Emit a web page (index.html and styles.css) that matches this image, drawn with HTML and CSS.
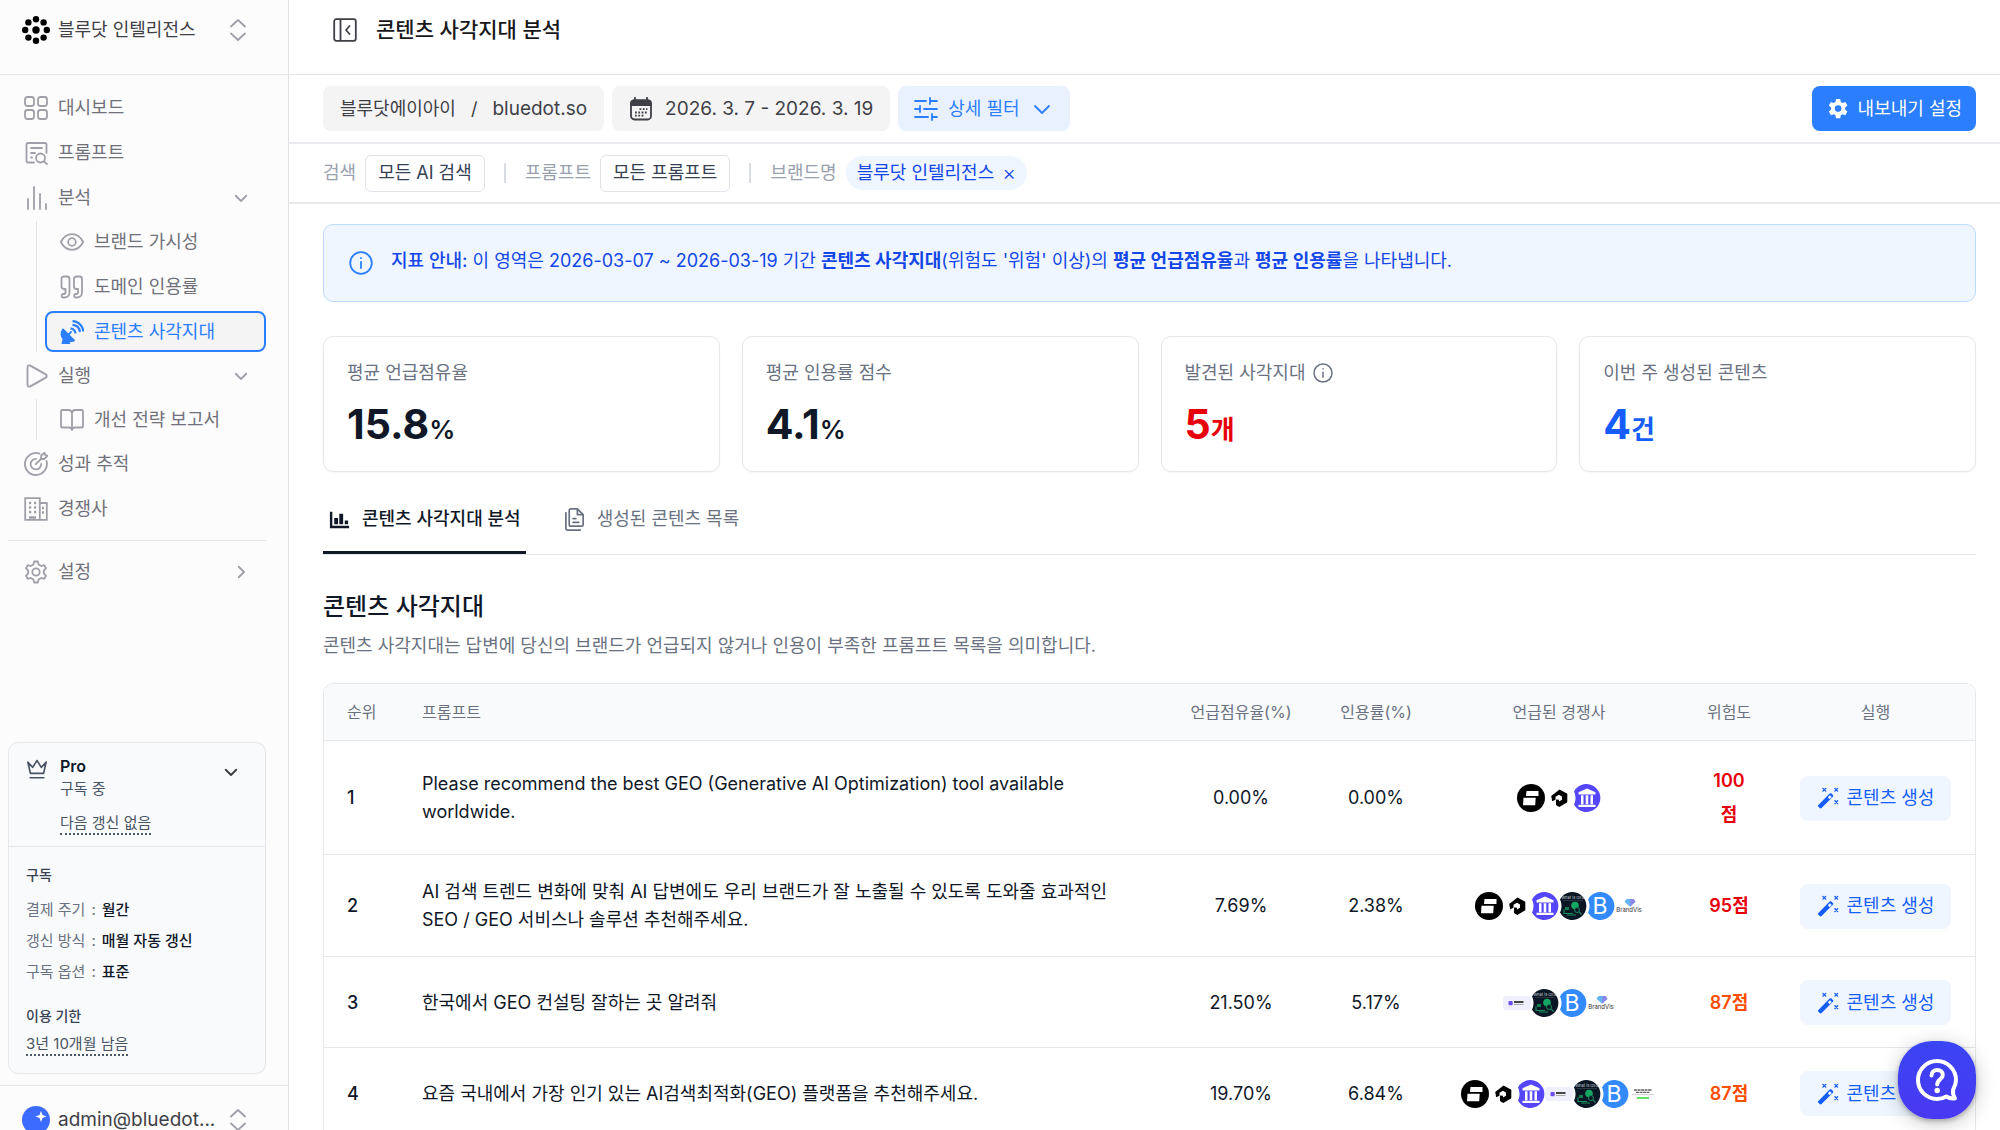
FILE: index.html
```html
<!DOCTYPE html>
<html lang="ko">
<head>
    <meta charset="UTF-8">
    <meta name="viewport" content="width=device-width, initial-scale=1">
    <title>콘텐츠 사각지대 분석</title>
    <link rel="stylesheet" href="styles.css">
</head>
<body>
<!-- icons -->
<svg class="sprite" aria-hidden="true">
    <symbol id="i-updown" viewBox="0 0 24 24"><path d="M5 8.5 12 2l7 6.5M5 15.5 12 22l7-6.5"/></symbol>
    <symbol id="i-down" viewBox="0 0 24 24"><path d="m5 9 7 7 7-7"/></symbol>
    <symbol id="i-right" viewBox="0 0 24 24"><path d="m9 5 7 7-7 7"/></symbol>
    <symbol id="i-grid" viewBox="0 0 24 24"><rect x="1" y="1" width="9" height="9" rx="2.5"/><rect x="14" y="1" width="9" height="9" rx="2.5"/><rect x="1" y="14" width="9" height="9" rx="2.5"/><rect x="14" y="14" width="9" height="9" rx="2.5"/></symbol>
    <symbol id="i-prompt" viewBox="0 0 24 24"><path d="M10 21.500H4a1.500 1.500 0 0 1-1.500-1.500V3.500A1.500 1.500 0 0 1 4 2h17a1.500 1.500 0 0 1 1.500 1.500V12M7 7h11M7 12h4M7 16.500h1"/><circle cx="16.500" cy="17" r="4.500"/><path d="m20 20.500 3 2.500"/></symbol>
    <symbol id="i-bars" viewBox="0 0 24 24"><path d="M4 13v10M10 1v22M16 8v15M22 18v5"/></symbol>
    <symbol id="i-eye" viewBox="0 0 24 24"><path d="M.8 12C3.500 7 7.500 4.200 12 4.200S20.500 7 23.200 12C20.500 17 16.500 19.800 12 19.800S3.500 17 .8 12z"/><circle cx="12" cy="12" r="3.800"/></symbol>
    <symbol id="i-quote" viewBox="0 0 24 24"><path d="M1.500 4A2.500 2.500 0 0 1 4 1.500h3A2.500 2.500 0 0 1 9.500 4v13.500A5 5 0 0 1 4.500 22.500H3a1.300 1.300 0 0 1-1.300-1.300v-.9A1.300 1.300 0 0 1 3 19h.8A1.700 1.700 0 0 0 5.500 17.300V14H4a2.500 2.500 0 0 1-2.500-2.500z"/><path d="M14 4a2.500 2.500 0 0 1 2.500-2.500h3A2.500 2.500 0 0 1 22 4v13.500a5 5 0 0 1-5 5h-1.500a1.300 1.300 0 0 1-1.300-1.300v-.9a1.300 1.300 0 0 1 1.300-1.300h.8a1.700 1.700 0 0 0 1.700-1.700V14h-1.500a2.500 2.500 0 0 1-2.500-2.500z"/></symbol>
    <symbol id="i-dish" viewBox="0 0 24 24"><path d="M3 9.500 14 20.500l-5.500 1 .7 2H2.500L3.500 19C1.200 16.500 1 13 3 9.500z" fill="currentColor"/><path d="m8 15 3-3"/><path d="M10.500 8.500c2.800.3 4.700 2.200 5 5M12.500 4.800c4 .3 7 3 7.500 7.200M12.500 1.200c6 .2 10.300 4.300 10.800 10.300" stroke-linecap="butt" stroke-width="2.200"/></symbol>
    <symbol id="i-play" viewBox="0 0 24 24"><path d="M3.500 3.200v17.600c0 1.500 1.500 2.300 2.800 1.600l15.500-8.800c1.300-.7 1.300-2.500 0-3.200L6.300 1.600C5 .9 3.500 1.700 3.500 3.200z"/></symbol>
    <symbol id="i-book" viewBox="0 0 24 24"><path d="M12 5.500C12 3.500 10.500 2 8.500 2H2.300C1.500 2 1 2.500 1 3.300v14.900c0 .8.500 1.300 1.300 1.300H9c1.700 0 3 1 3 2.500 0-1.500 1.300-2.500 3-2.500h6.700c.8 0 1.300-.5 1.300-1.300V3.300C23 2.500 22.500 2 21.700 2h-6.200c-2 0-3.500 1.500-3.500 3.500zM12 5.500V22"/></symbol>
    <symbol id="i-target" viewBox="0 0 24 24"><path d="M15.500 1.600A11 11 0 1 0 22.500 9M12 6.800A5.300 5.300 0 1 0 17.200 12M11.800 12.200 17 7M17 7l.2-3.500L20.500.8l.7 2.200 2.200.7-2.900 3.300z"/></symbol>
    <symbol id="i-building" viewBox="0 0 24 24"><path d="M1.200 1.200h14.600v21.600H1.200zM15.800 6h7v16.800h-7" stroke-linejoin="miter"/><path d="M5 6h2.200M10 6h2.200M5 10.500h2.200M10 10.500h2.200M5 15h2.200M10 15h2.200M18 11h2M18 15.500h2M5 20.500h7" stroke-width="2.400" stroke-linecap="butt"/></symbol>
    <symbol id="i-gear" viewBox="0 0 24 24"><path d="M10.200 1.500h3.600l.8 3 2.600 1.500 3-.8 1.800 3.100-2.200 2.200v3l2.200 2.200-1.800 3.100-3-.8-2.600 1.500-.8 3h-3.600l-.8-3L6.800 18l-3 .8L2 15.700l2.200-2.200v-3L2 8.300l1.800-3.100 3 .8 2.600-1.500z"/><circle cx="12" cy="12" r="3.700"/></symbol>
    <symbol id="i-crown" viewBox="0 0 24 24"><path d="m2 4.500 2.800 12.200h14.400L22 4.500l-5.300 5.700L12 2.800l-4.700 7.400zM4.500 21.500h15"/></symbol>
    <symbol id="i-collapse" viewBox="0 0 24 24"><rect x="1.200" y="1.200" width="21.600" height="21.600" rx="2"/><path d="M7.500 1.500v21M16.500 8l-3.500 4 3.500 4"/></symbol>
    <symbol id="i-calendar" viewBox="0 0 24 24"><rect x="2" y="3.500" width="20" height="19" rx="3.500"/><path d="M2 8V6.500a3 3 0 0 1 3-3h14a3 3 0 0 1 3 3V8z" fill="currentColor"/><path d="M6 .8v3M18 .8v3"/><path d="M10.500 12.200h8M6 15.500h12.500M6 18.700h9" stroke-dasharray="1.800 1.500" stroke-linecap="butt"/></symbol>
    <symbol id="i-sliders" viewBox="0 0 24 24"><path d="M1 4h11M16 1v6M16 4h7M1 12h5M6 9v6M10 12h13M1 20h13M18 20h5M18 17v6"/></symbol>
    <symbol id="i-cog" viewBox="0 0 24 24"><path fill="currentColor" fill-rule="evenodd" stroke="none" d="M10 2h4.200l.6 3 1.600.9 2.900-1 2.100 3.700-2.300 2v2l2.300 2-2.100 3.700-2.900-1-1.600.9-.6 3H10l-.6-3-1.600-.9-2.900 1-2.100-3.700 2.300-2v-2l-2.300-2 2.100-3.700 2.900 1 1.600-.9zM12.100 8.300a3.300 3.300 0 1 0 0 6.600 3.300 3.300 0 0 0 0-6.600z"/></symbol>
    <symbol id="i-info" viewBox="0 0 24 24"><circle cx="12" cy="12" r="10.800"/><path d="M12 11v6M12 7v.2"/></symbol>
    <symbol id="i-chart" viewBox="0 0 24 24"><path fill="currentColor" stroke="none" d="M2 4h2.500v14.500H22V21H2zM6.500 10.500h4V17h-4zM11.800 6h4v11h-4zM17.500 13H21v4h-3.500z"/></symbol>
    <symbol id="i-docs" viewBox="0 0 24 24"><path d="M6.500 2.500A1.500 1.500 0 0 1 8 1h7l6 6v10.500a1.500 1.500 0 0 1-1.500 1.500H8a1.500 1.500 0 0 1-1.500-1.500zM15 1v6h6M10.500 11h3M10.500 15h6M3 5v16.500A1.500 1.500 0 0 0 4.500 23H18"/></symbol>
    <symbol id="i-wand" viewBox="0 0 24 24"><path fill="currentColor" stroke="none" fill-rule="evenodd" d="M1.500 19.500 13.800 7.200a1.500 1.500 0 0 1 2.100 0l1.400 1.400a1.500 1.500 0 0 1 0 2.100L5 23a1.500 1.500 0 0 1-2.100 0l-1.400-1.400a1.500 1.500 0 0 1 0-2.100zM11.800 11.300l2 2 2.300-2.300-2-2z"/><path d="m6.500 1.500 3 3m0-3-3 3M19.500 1.500l3 3m0-3-3 3M19.500 15l3 3m0-3-3 3" stroke-width="1.500"/></symbol>
    <!-- competitor logos -->
    <symbol id="c-block" viewBox="0 0 28 28"><circle cx="14" cy="14" r="14" fill="#000"/><path d="M9.500 7h12v5H9zM6.500 13.800h12.200l-.5 7.400H6z" fill="#fff"/></symbol>
    <symbol id="c-hex" viewBox="0 0 28 28"><path fill="#000" fill-rule="evenodd" d="m14.500 5.500 7.800 4.300v8.500l-8 4.700-3.300-2v-5.500l3 .3v1.700l3-1.800v-3.300l-3-1.700-3.500 2v3l-3.300 1.500-1-5.300z"/></symbol>
    <symbol id="c-bank" viewBox="0 0 28 28"><path d="M1 7.500a14 14 0 1 1 0 13c2-4 2-9 0-13z" fill="#5546fb"/><path fill="#fff" d="m14 4.500 8.500 3.700v2.300h-17V8.200zM8 11.300h2.500v9H8zM12.700 11.300h2.600v9h-2.600zM17.500 11.300H20v9h-2.500zM5.500 20.800h17V23h-17z"/></symbol>
    <symbol id="c-geo" viewBox="0 0 28 28"><path d="M1 7.500a14 14 0 1 1 0 13c2-4 2-9 0-13z" fill="#0b1624"/><text x="14" y="7" font-size="4" text-anchor="middle" fill="#ccd4d8">What is GEO</text><path d="M4 8.500h20" stroke="#38454f" stroke-width=".7"/><circle cx="16" cy="13.500" r="3.800" fill="#14a764"/><circle cx="18" cy="18" r="2.500" fill="#0b1624" stroke="#178b5c"/><path d="m20 20 2.500 2.500M5 17.500v4h9M8 23h9" stroke="#178b5c" stroke-width="1.200" fill="none"/><path d="M6 15h4v3H6z" fill="#0f7d4d"/></symbol>
    <symbol id="c-b" viewBox="0 0 28 28"><path d="M1 7.500a14 14 0 1 1 0 13c2-4 2-9 0-13z" fill="#338afc"/><text x="13" y="22" font-size="23" text-anchor="middle" fill="#fff">B</text></symbol>
    <symbol id="c-vis" viewBox="0 0 28 28"><path d="M11.500 7h7l2 2.800-5.500 5-5.500-5z" fill="#64b5f3"/><path d="M15.500 7h3l2 2.800-5.500 5z" fill="#8e86ee"/><text x="14" y="20" font-size="6" text-anchor="middle" fill="#333">BrandVis</text></symbol>
    <symbol id="c-card" viewBox="0 0 28 28"><rect y="7" width="28" height="14" rx="3" fill="#f0effd"/><rect x="5.500" y="12" width="4.200" height="4.200" rx="1" fill="#6d4df0"/><path d="M11 13h9.500" stroke="#333" stroke-width="1.800" stroke-linecap="butt"/><path d="M11 15.500h9.500" stroke="#999" stroke-width=".8"/></symbol>
    <symbol id="c-sheet" viewBox="0 0 28 28"><path d="M5 10h18M7 12.300h14" stroke="#666" stroke-width="1.300" stroke-dasharray="3 .5"/><path d="M3 14.700h22" stroke="#bbb" stroke-width=".8"/><path d="M8 18h12" stroke="#5be36a" stroke-width="2"/></symbol>
</svg>

<div class="app">
    <aside class="sidebar">
        <button type="button" class="workspace">
            <svg class="logo" viewBox="0 0 28 28">
                <circle cx="14" cy="14" r="3.700"/><circle cx="14" cy="3.200" r="3.200"/><circle cx="14" cy="24.800" r="3.200"/><circle cx="3.200" cy="14" r="3.200"/><circle cx="24.800" cy="14" r="3.200"/><circle cx="6.400" cy="6.400" r="3.200"/><circle cx="21.600" cy="6.400" r="3.200"/><circle cx="6.400" cy="21.600" r="3.200"/><circle cx="21.600" cy="21.600" r="3.200"/>
            </svg>
            <span class="name">블루닷 인텔리전스</span>
            <svg class="icon muted"><use href="#i-updown"/></svg>
        </button>

        <nav class="menu">
            <a href="#" class="item"><svg class="icon"><use href="#i-grid"/></svg><span>대시보드</span></a>
            <a href="#" class="item"><svg class="icon"><use href="#i-prompt"/></svg><span>프롬프트</span></a>
            <a href="#" class="item"><svg class="icon"><use href="#i-bars"/></svg><span>분석</span><svg class="icon arrow"><use href="#i-down"/></svg></a>
            <div class="submenu">
                <a href="#" class="item"><svg class="icon"><use href="#i-eye"/></svg><span>브랜드 가시성</span></a>
                <a href="#" class="item"><svg class="icon"><use href="#i-quote"/></svg><span>도메인 인용률</span></a>
                <a href="#" class="item active"><svg class="icon"><use href="#i-dish"/></svg><span>콘텐츠 사각지대</span></a>
            </div>
            <a href="#" class="item"><svg class="icon"><use href="#i-play"/></svg><span>실행</span><svg class="icon arrow"><use href="#i-down"/></svg></a>
            <div class="submenu">
                <a href="#" class="item"><svg class="icon"><use href="#i-book"/></svg><span>개선 전략 보고서</span></a>
            </div>
            <a href="#" class="item"><svg class="icon"><use href="#i-target"/></svg><span>성과 추적</span></a>
            <a href="#" class="item"><svg class="icon"><use href="#i-building"/></svg><span>경쟁사</span></a>
        </nav>
        <nav class="menu settings">
            <a href="#" class="item"><svg class="icon"><use href="#i-gear"/></svg><span>설정</span><svg class="icon arrow"><use href="#i-right"/></svg></a>
        </nav>

        <section class="plan">
            <div class="plan-head">
                <svg class="icon"><use href="#i-crown"/></svg>
                <div class="plan-name">
                    <strong>Pro</strong>
                    <span>구독 중</span>
                    <span class="dotted">다음 갱신 없음</span>
                </div>
                <svg class="icon arrow"><use href="#i-down"/></svg>
            </div>
            <div class="plan-body">
                <h3>구독</h3>
                <p><span>결제 주기</span><span>:</span><b>월간</b></p>
                <p><span>갱신 방식</span><span>:</span><b>매월 자동 갱신</b></p>
                <p><span>구독 옵션</span><span>:</span><b>표준</b></p>
                <h3 class="term">이용 기한</h3>
                <span class="dotted">3년 10개월 남음</span>
            </div>
        </section>

        <button type="button" class="account">
            <svg class="logo" viewBox="0 0 28 28"><circle cx="14" cy="14" r="14" fill="#3c6bff"/><path d="m19 5 1.500 4 4 1.500-4 1.500-1.500 4-1.500-4-4-1.500 4-1.500z" fill="#fff"/></svg>
            <span class="name">admin@bluedot...</span>
            <svg class="icon muted"><use href="#i-updown"/></svg>
        </button>
    </aside>

    <main class="main">
        <header class="topbar">
            <svg class="icon"><use href="#i-collapse"/></svg>
            <h1>콘텐츠 사각지대 분석</h1>
        </header>

        <div class="toolbar">
            <button type="button" class="chip"><span>블루닷에이아이</span><span class="slash">/</span><span class="latin">bluedot.so</span></button>
            <button type="button" class="chip"><svg class="icon"><use href="#i-calendar"/></svg><span class="latin">2026. 3. 7 - 2026. 3. 19</span></button>
            <button type="button" class="chip blue"><svg class="icon"><use href="#i-sliders"/></svg><span>상세 필터</span><svg class="icon"><use href="#i-down"/></svg></button>
            <button type="button" class="chip export"><svg class="icon"><use href="#i-cog"/></svg><span>내보내기 설정</span></button>
        </div>

        <div class="filters">
            <div class="filter"><span>검색</span><button type="button">모든 AI 검색</button></div>
            <div class="filter"><span>프롬프트</span><button type="button">모든 프롬프트</button></div>
            <div class="filter"><span>브랜드명</span><button type="button" class="pill">블루닷 인텔리전스<i>×</i></button></div>
        </div>

        <div class="content">
            <div class="notice">
                <svg class="icon"><use href="#i-info"/></svg>
                <p><b class="mid">지표 안내:</b> 이 영역은 2026-03-07 ~ 2026-03-19 기간 <b>콘텐츠 사각지대</b>(위험도 '위험' 이상)의 <b>평균 언급점유율</b>과 <b>평균 인용률</b>을 나타냅니다.</p>
            </div>

            <div class="cards">
                <div class="card"><h4>평균 언급점유율</h4><p>15.8<small>%</small></p></div>
                <div class="card"><h4>평균 인용률 점수</h4><p>4.1<small>%</small></p></div>
                <div class="card red"><h4>발견된 사각지대 <svg class="icon"><use href="#i-info"/></svg></h4><p>5<small>개</small></p></div>
                <div class="card blue"><h4>이번 주 생성된 콘텐츠</h4><p>4<small>건</small></p></div>
            </div>

            <div class="tabs">
                <button type="button" class="tab on"><svg class="icon"><use href="#i-chart"/></svg><span>콘텐츠 사각지대 분석</span></button>
                <button type="button" class="tab"><svg class="icon"><use href="#i-docs"/></svg><span>생성된 콘텐츠 목록</span></button>
            </div>

            <h2>콘텐츠 사각지대</h2>
            <p class="desc">콘텐츠 사각지대는 답변에 당신의 브랜드가 언급되지 않거나 인용이 부족한 프롬프트 목록을 의미합니다.</p>

            <div class="table-wrap">
                <table>
                    <thead>
                        <tr>
                            <th class="c-rank">순위</th>
                            <th class="c-prompt">프롬프트</th>
                            <th class="c-share">언급점유율(%)</th>
                            <th class="c-cite">인용률(%)</th>
                            <th class="c-comp">언급된 경쟁사</th>
                            <th class="c-risk">위험도</th>
                            <th class="c-act">실행</th>
                        </tr>
                    </thead>
                    <tbody>
                        <tr>
                            <td class="rank">1</td>
                            <td class="prompt">Please recommend the best GEO (Generative AI Optimization) tool available worldwide.</td>
                            <td>0.00%</td>
                            <td>0.00%</td>
                            <td><div class="logos"><svg><use href="#c-block"/></svg><svg><use href="#c-hex"/></svg><svg><use href="#c-bank"/></svg></div></td>
                            <td class="risk high">100점</td>
                            <td><button type="button" class="make"><svg class="icon"><use href="#i-wand"/></svg><span>콘텐츠 생성</span></button></td>
                        </tr>
                        <tr>
                            <td class="rank">2</td>
                            <td class="prompt">AI 검색 트렌드 변화에 맞춰 AI 답변에도 우리 브랜드가 잘 노출될 수 있도록 도와줄 효과적인 SEO / GEO 서비스나 솔루션 추천해주세요.</td>
                            <td>7.69%</td>
                            <td>2.38%</td>
                            <td><div class="logos"><svg><use href="#c-block"/></svg><svg><use href="#c-hex"/></svg><svg><use href="#c-bank"/></svg><svg><use href="#c-geo"/></svg><svg><use href="#c-b"/></svg><svg><use href="#c-vis"/></svg></div></td>
                            <td class="risk high">95점</td>
                            <td><button type="button" class="make"><svg class="icon"><use href="#i-wand"/></svg><span>콘텐츠 생성</span></button></td>
                        </tr>
                        <tr>
                            <td class="rank">3</td>
                            <td class="prompt">한국에서 GEO 컨설팅 잘하는 곳 알려줘</td>
                            <td>21.50%</td>
                            <td>5.17%</td>
                            <td><div class="logos"><svg><use href="#c-card"/></svg><svg><use href="#c-geo"/></svg><svg><use href="#c-b"/></svg><svg><use href="#c-vis"/></svg></div></td>
                            <td class="risk">87점</td>
                            <td><button type="button" class="make"><svg class="icon"><use href="#i-wand"/></svg><span>콘텐츠 생성</span></button></td>
                        </tr>
                        <tr>
                            <td class="rank">4</td>
                            <td class="prompt">요즘 국내에서 가장 인기 있는 AI검색최적화(GEO) 플랫폼을 추천해주세요.</td>
                            <td>19.70%</td>
                            <td>6.84%</td>
                            <td><div class="logos"><svg><use href="#c-block"/></svg><svg><use href="#c-hex"/></svg><svg><use href="#c-bank"/></svg><svg><use href="#c-card"/></svg><svg><use href="#c-geo"/></svg><svg><use href="#c-b"/></svg><svg><use href="#c-sheet"/></svg></div></td>
                            <td class="risk">87점</td>
                            <td><button type="button" class="make"><svg class="icon"><use href="#i-wand"/></svg><span>콘텐츠 생성</span></button></td>
                        </tr>
                    </tbody>
                </table>
            </div>
        </div>
    </main>
</div>

<button type="button" class="help" aria-label="도움말">
    <svg viewBox="0 0 44 44"><path d="M22 3C11.500 3 3 11.500 3 22s8.500 19 19 19c3.500 0 6.500-.8 9.300-2.500 2.700 1.700 5.700 2.300 8.700 1.800-1.800-2.500-2.500-5.500-1.800-8.800A19 19 0 0 0 41 22C41 11.500 32.500 3 22 3z"/><path d="M16.500 17.500c0-3.500 2.500-5.500 5.700-5.500s5.600 2 5.600 5c0 4.300-5.600 4.500-5.600 9.500"/><path d="M22.200 32.500v.1" stroke-width="5.500"/></svg>
</button>
</body>
</html>
```
FILE: styles.css
```css
*{
    box-sizing:border-box;
}
body{
    margin:0;
    font-family:Inter,"Noto Sans CJK KR",sans-serif;
    font-size:18px;
    line-height:28px;
    color:#101828;
    background:#fff;
}
h1,h2,h3,h4,p{
    margin:0;
}
a{
    color:inherit;
    text-decoration:none;
}
button{
    font:inherit;
    color:inherit;
    border:0;
    background:none;
    padding:0;
    white-space:nowrap;
}
.sprite{
    display:none;
}
.icon{
    width:24px;
    height:24px;
    flex:none;
    fill:none;
    stroke:currentColor;
    stroke-width:1.8;
    stroke-linecap:round;
    stroke-linejoin:round;
}
.app{
    display:flex;
    height:100vh;
    overflow:hidden;
}

/* sidebar */
.sidebar{
    display:flex;
    flex-direction:column;
    width:289px;
    flex:none;
    overflow:hidden;
    background:#fcfcfc;
    border-right:1px solid #e4e4e7;
}
.workspace,.account{
    display:flex;
    align-items:center;
    gap:8px;
    flex:none;
    padding:0 38px 0 22px;
    text-align:left;
    color:#3f3f46;
}
.workspace{
    height:75px;
    padding-bottom:14px;
    border-bottom:1px solid #e4e4e7;
}
.account{
    height:45px;
    padding-top:24px;
    font-size:19px;
    border-top:1px solid #e4e4e7;
}
.logo{
    width:28px;
    height:28px;
    flex:none;
}
.name{
    flex:1;
}
.muted,.arrow{
    color:#9f9fa9;
}
.menu{
    display:flex;
    flex-direction:column;
    gap:4px;
    margin:0 22px 0 8px;
    padding:12px 0 11px;
    color:#71717b;
}
.item{
    display:flex;
    align-items:center;
    gap:10px;
    height:41px;
    padding:0 16px;
}
.item .icon{
    color:#9f9fa9;
}
.item .arrow{
    width:18px;
    height:18px;
    margin-left:auto;
    stroke-width:2.4;
}
.submenu{
    display:flex;
    flex-direction:column;
    gap:4px;
    margin:-1px 0 -1px 28px;
    padding-left:8px;
    border-left:1px solid #e4e4e7;
}
.submenu .item{
    padding-left:15px;
}
.item.active{
    color:#2b7fff;
    padding-left:13px;
    background:#f4f4f5;
    border:2px solid #2b7fff;
    border-radius:8px;
}
.active .icon{
    color:#2b7fff;
}
.settings{
    border-top:1px solid #e4e4e7;
    padding-top:10px;
}

.plan{
    margin:auto 22px 11px 8px;
    font-size:15px;
    line-height:24px;
    color:#4a5565;
    background:#f9fafb;
    border:1px solid #e5e7eb;
    border-radius:10px;
}
.plan-head{
    display:flex;
    gap:12px;
    padding:12px 25px 11px 17px;
    border-bottom:1px solid #e5e7eb;
}
.plan-head .icon{
    width:22px;
    height:22px;
    margin-top:3px;
}
.plan-head .arrow{
    width:18px;
    height:18px;
    margin:8px 0 0 auto;
    stroke-width:2.6;
    color:#3f3f46;
}
.plan-name{
    display:flex;
    flex-direction:column;
    align-items:flex-start;
}
.plan-name strong{
    color:#101828;
    font-size:16px;
    line-height:22px;
    font-weight:600;
}
.plan-name .dotted{
    margin-top:12px;
}
.dotted{
    display:inline-block;
    line-height:20px;
    border-bottom:2px dotted #4a5565;
}
.plan-body{
    padding:16px 17px 17px;
}
.plan-body h3{
    font-size:14px;
    line-height:24px;
    font-weight:500;
    color:#364153;
    margin-bottom:7px;
}
.plan-body p{
    display:flex;
    gap:6px;
    line-height:31px;
    color:#6a7282;
}
.plan-body b{
    color:#101828;
    font-weight:500;
}
.plan-body .term{
    margin:17px 0 4px;
}

/* main column */
.main{
    flex:1;
    min-width:0;
    overflow-y:auto;
    scrollbar-width:none;
}
.topbar{
    display:flex;
    align-items:center;
    gap:19px;
    height:75px;
    padding:0 33px 14px 44px;
    border-bottom:1px solid #e4e4e7;
    color:#3f3f46;
}
h1{
    font-size:21px;
    font-weight:500;
    color:#18181b;
}
.toolbar{
    display:flex;
    gap:8px;
    padding:11px 24px 11px 34px;
    border-bottom:2px solid #e9eaee;
}
.chip{
    display:flex;
    align-items:center;
    gap:12px;
    height:45px;
    padding:0 17px;
    color:#3f3f46;
    background:#f4f4f5;
    border-radius:8px;
}
.latin{
    font-size:19px;
}
.chip .slash{
    padding:0 3px;
}
.chip.blue{
    gap:10px;
    padding:0 16px;
    color:#2b7fff;
    background:#e9f1fe;
}
.chip.export{
    gap:8px;
    margin-left:auto;
    padding:0 14px;
    color:#fff;
    background:#2b7fff;
}
.filters{
    display:flex;
    align-items:center;
    height:60px;
    padding:0 34px;
    border-bottom:2px solid #e9eaee;
    color:#99a1af;
}
.filter{
    display:flex;
    align-items:center;
    gap:9px;
}
.filter+.filter::before{
    content:"";
    width:2px;
    height:20px;
    margin:0 10px 0 19px;
    background:#d9dce1;
}
.filter button{
    height:37px;
    padding:0 12px;
    color:#364153;
    border:1px solid #e0e3e8;
    border-radius:6px;
    background:#fff;
}
.filter .pill{
    display:flex;
    align-items:center;
    gap:8px;
    height:34px;
    padding:0 11px;
    color:#1447e6;
    border:0;
    border-radius:17px;
    background:#eff6ff;
}
.pill i{
    font-size:21px;
    font-style:normal;
    font-weight:300;
}

.content{
    padding:20px 24px 40px 34px;
}
.notice{
    display:flex;
    align-items:center;
    gap:18px;
    height:78px;
    padding:0 26px 0 25px;
    color:#1447e6;
    background:#eff6ff;
    border:1px solid #bedbff;
    border-radius:10px;
}
.notice .icon{
    color:#2b7fff;
}
.notice p{
    padding-bottom:4px;
}
.notice b{
    font-weight:600;
}
.notice .mid{
    font-weight:500;
}
.cards{
    display:grid;
    grid-template-columns:repeat(4,1fr);
    gap:22px;
    margin-top:34px;
}
.card{
    padding:22px 23px;
    border:1px solid #e5e7eb;
    border-radius:10px;
    box-shadow:0 1px 2px rgba(0,0,0,.04);
}
.card h4{
    display:flex;
    align-items:center;
    gap:8px;
    font-size:18px;
    font-weight:400;
    color:#6a7282;
}
.card .icon{
    width:20px;
    height:20px;
}
.card p{
    margin-top:12px;
    font-size:41px;
    line-height:50px;
    font-weight:700;
}
.card small{
    font-size:26px;
    line-height:26px;
    font-weight:600;
}
.card.red p{
    color:#e7000b;
}
.card.blue p{
    color:#155dfc;
}

.tabs{
    display:flex;
    gap:32px;
    margin-top:19px;
    border-bottom:1px solid #e5e7eb;
}
.tab{
    display:flex;
    align-items:center;
    gap:11px;
    height:63px;
    padding:0 5px 4px;
    color:#6a7282;
    border-bottom:3px solid transparent;
}
.tab .icon{
    width:23px;
    height:23px;
}
.tab.on{
    color:#101828;
    font-weight:500;
    border-color:#101828;
}
h2{
    margin-top:34px;
    font-size:24px;
    line-height:36px;
    font-weight:500;
}
.desc{
    margin-top:7px;
    color:#6a7282;
}

/* table */
.table-wrap{
    margin-top:23px;
    border:1px solid #e5e7eb;
    border-radius:10px;
    overflow:hidden;
}
table{
    width:100%;
    table-layout:fixed;
    border-collapse:separate;
    border-spacing:0;
}
th{
    height:57px;
    padding:0;
    font-size:16px;
    font-weight:400;
    color:#6a7282;
    background:#f9fafb;
    border-bottom:1px solid #e5e7eb;
}
td{
    padding:23px 0 22px;
    text-align:center;
    vertical-align:middle;
    border-bottom:1px solid #e5e7eb;
}
tr:last-child td{
    border-bottom:0;
}
.c-rank,.rank{
    width:75px;
    padding-left:23px;
    text-align:left;
}
.rank{
    font-weight:500;
}
.c-prompt,.prompt{
    padding-left:23px;
    padding-right:23px;
    text-align:left;
}
.c-share{
    width:150px;
}
.c-cite{
    width:120px;
}
.c-comp{
    width:246px;
}
.c-risk{
    width:94px;
}
.c-act{
    width:199px;
}
.risk{
    padding-left:25px;
    padding-right:25px;
    line-height:34px;
    font-weight:600;
    color:#ff4d00;
}
.risk.high{
    color:#e7000b;
}
.logos{
    display:flex;
    justify-content:center;
}
.logos svg{
    width:28px;
    height:28px;
}
.make{
    display:inline-flex;
    align-items:center;
    gap:8px;
    height:45px;
    padding:0 17px;
    color:#155dfc;
    background:#eff6ff;
    border-radius:8px;
    vertical-align:top;
}
.make .icon{
    width:22px;
    height:22px;
}

.help{
    position:fixed;
    right:24px;
    bottom:11px;
    width:78px;
    height:78px;
    display:flex;
    align-items:center;
    justify-content:center;
    border-radius:34px;
    background:linear-gradient(#3a45f5,#4a38f2);
    box-shadow:0 4px 20px rgba(0,0,0,.22),0 2px 5px rgba(0,0,0,.25);
}
.help svg{
    width:44px;
    height:44px;
    fill:none;
    stroke:#fff;
    stroke-width:4;
    stroke-linecap:round;
    stroke-linejoin:round;
}
```
